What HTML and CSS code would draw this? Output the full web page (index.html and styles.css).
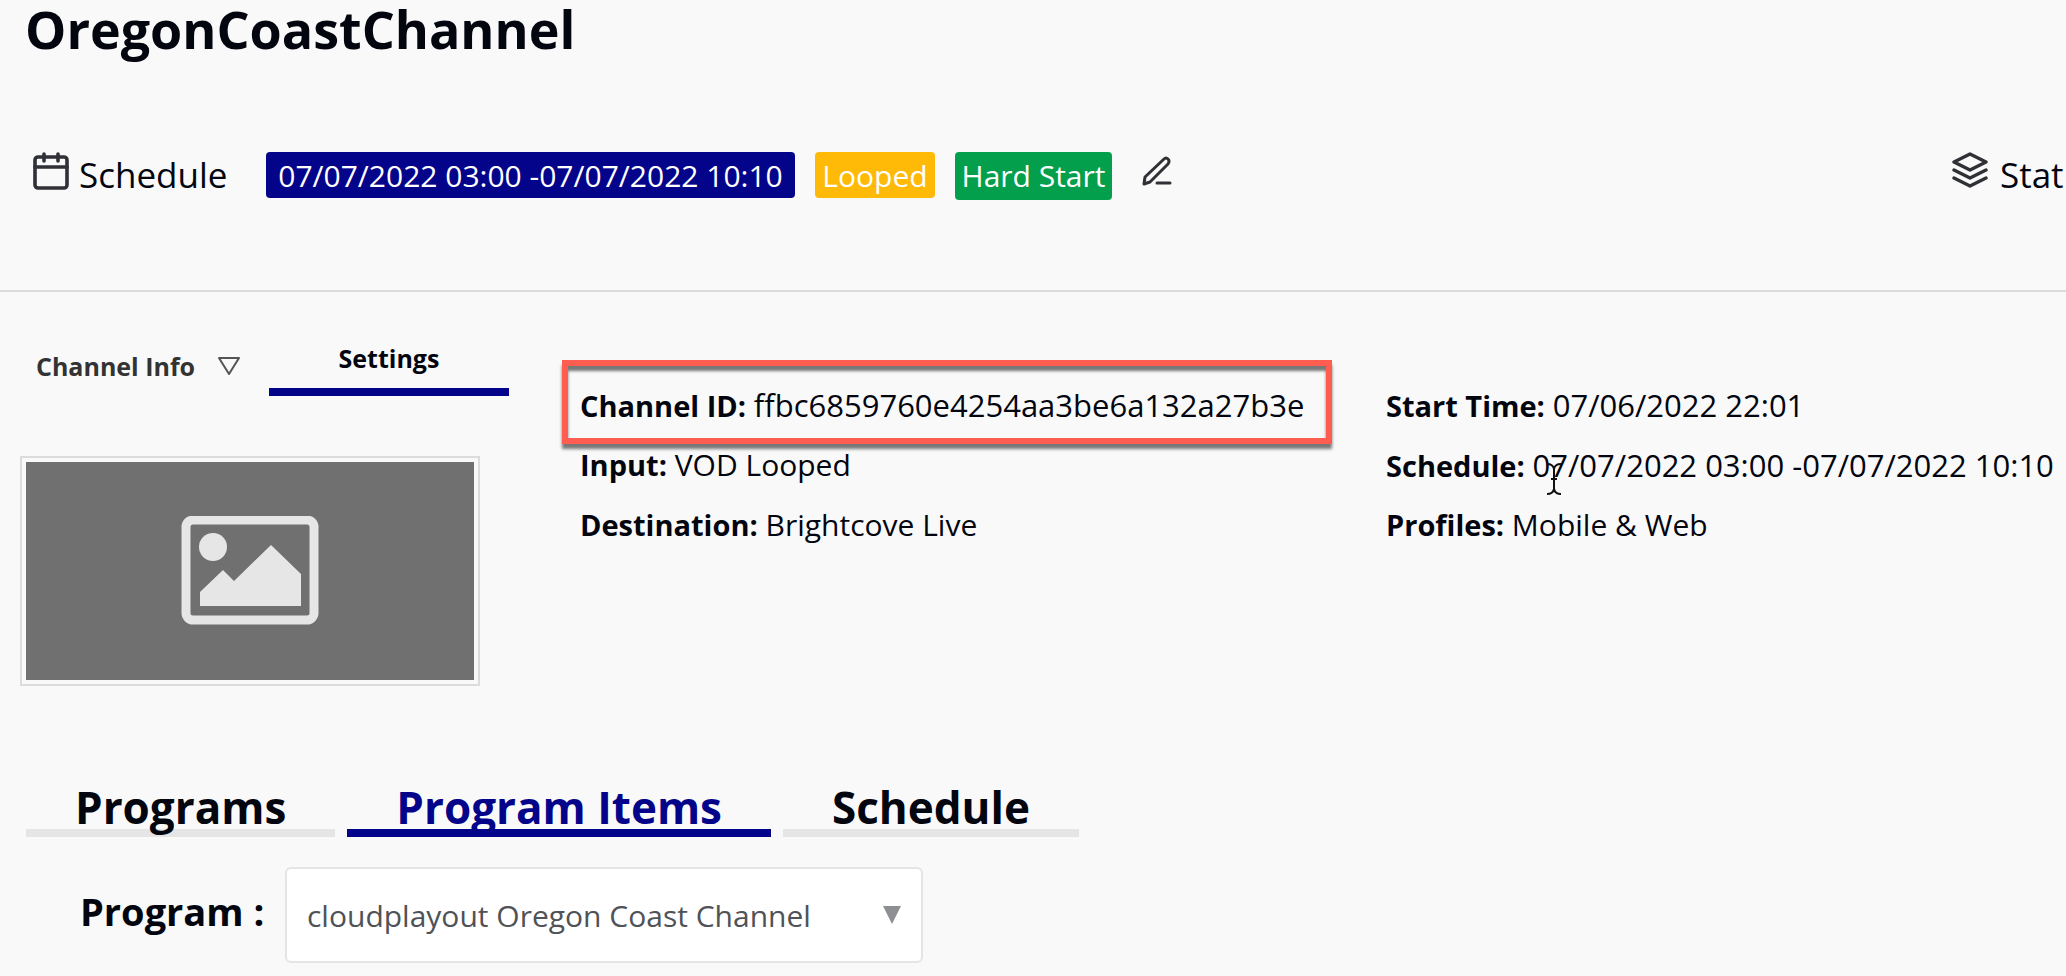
FILE: index.html
```html
<!DOCTYPE html>
<html lang="en">
<head>
    <meta charset="utf-8">
    <title>OregonCoastChannel</title>
    <link rel="stylesheet" href="styles.css">
</head>
<body>
    <header class="channel-header">
        <h1>OregonCoastChannel</h1>
        <div class="toolbar">
            <div class="schedule">
                <svg class="calendar-icon" viewBox="0 0 36 38" fill="none" stroke="#303136" stroke-width="3.6" stroke-linecap="round" stroke-linejoin="round">
                    <rect x="2" y="5" width="32" height="31" rx="3"/>
                    <path d="M2 15h32M11 2v7M25 2v7"/>
                </svg>
                <span class="label">Schedule</span>
            </div>
            <span class="badge badge-date">07/07/2022 03:00 -07/07/2022 10:10</span>
            <span class="badge badge-looped">Looped</span>
            <span class="badge badge-start">Hard Start</span>
            <button class="edit" aria-label="Edit schedule">
                <svg viewBox="0 0 30 30" fill="none" stroke="#303136" stroke-width="3" stroke-linecap="round" stroke-linejoin="round">
                    <path d="M2 28l1-7L22 3q2-2 4 0t0 5L8 26zM15 27h13"/>
                </svg>
            </button>
            <div class="status">
                <svg viewBox="0 0 36 36" fill="none" stroke="#303136" stroke-width="3.4" stroke-linecap="round" stroke-linejoin="round">
                    <path d="M18 2l16 8-16 8-16-8zM2 18l16 8 16-8M2 26l16 8 16-8"/>
                </svg>
                <span class="label">Stat</span>
            </div>
        </div>
    </header>

    <main>
        <section class="info">
            <div class="side">
                <div class="info-tabs">
                    <button class="info-toggle">Channel Info
                        <svg viewBox="0 0 24 20" fill="none" stroke="#555" stroke-width="2" stroke-linejoin="round"><path d="M2 2h20l-10 16z"/></svg>
                    </button>
                    <button class="info-tab">Settings</button>
                </div>
                <div class="thumb">
                    <svg viewBox="0 0 138 110" fill="#e6e6e6">
                        <rect x="5" y="4" width="128" height="100" rx="7" fill="none" stroke="#e6e6e6" stroke-width="9"/>
                        <circle cx="32" cy="31" r="14"/>
                        <path d="M19 76l23-22 11 11 37-36 30 29v32H19z"/>
                    </svg>
                </div>
            </div>
            <div class="details">
                <p class="highlight"><b>Channel ID:</b> <span class="code">ffbc6859760e4254aa3be6a132a27b3e</span></p>
                <p><b>Input:</b> VOD Looped</p>
                <p><b>Destination:</b> Brightcove Live</p>
            </div>
            <div class="details times">
                <p><b>Start Time:</b> <span class="code">07/06/2022 22:01</span></p>
                <p class="hovered"><b>Schedule:</b> <span class="code">07/07/2022 03:00 -07/07/2022 10:10</span>
                    <svg class="cursor" viewBox="0 0 16 34" fill="none" stroke="#111" stroke-width="2"><path d="M1 2q6 0 7 5 1-5 7-5M8 7v20M5 17h6M1 32q6 0 7-5 1 5 7 5"/></svg>
                </p>
                <p><b>Profiles:</b> Mobile &amp; Web</p>
            </div>
        </section>

        <nav class="tabs">
            <button>Programs</button>
            <button class="active">Program Items</button>
            <button>Schedule</button>
        </nav>

        <div class="program">
            <label for="program">Program :</label>
            <div class="select">
                <select id="program">
                    <option>cloudplayout Oregon Coast Channel</option>
                </select>
                <svg viewBox="0 0 18 18" fill="#8e8f93"><path d="M0 0h18L9 18z"/></svg>
            </div>
        </div>
    </main>
</body>
</html>
```

FILE: styles.css
```css
* { box-sizing: border-box; }
body { margin: 0; background: #f9f9f9; color: #03050f; font-family: "Open Sans", Arial, sans-serif; font-size: 30px; overflow-x: hidden; }
h1, p { margin: 0; }
svg { display: block; flex: none; }
button { font-family: inherit; color: inherit; background: none; border: none; padding: 0; cursor: pointer; }

.channel-header { height: 292px; border-bottom: 2px solid #dcdcdc; }
h1 { font-size: 52px; line-height: 58px; padding-left: 25px; font-weight: 700; }

.toolbar { display: flex; align-items: flex-start; padding: 94px 0 0 33px; white-space: nowrap; }
.label { font-size: 35px; line-height: 46px; }
.schedule { display: flex; gap: 10px; width: 233px; }
.calendar-icon { width: 36px; height: 38px; }
.badge { height: 46px; font-size: 30px; line-height: 48px; margin-right: 20px; border-radius: 4px; color: #fff; text-align: center; }
.badge-date { background: #04048a; width: 529px; }
.badge-looped { background: #ffb907; width: 120px; }
.badge-start { background: #049f4c; width: 157px; height: 48px; }
.edit { margin: 4px 0 0 10px; }
.edit svg { width: 30px; height: 30px; }
.status { display: flex; gap: 12px; margin-left: auto; width: 114px; }
.status svg { width: 36px; height: 36px; }

.info { display: flex; height: 486px; }
.side { width: 562px; padding-top: 48px; flex: none; }
.info-tabs { display: flex; height: 56px; padding-left: 36px; }
.info-toggle { display: flex; align-items: center; justify-content: space-between; width: 205px; margin-right: 28px; padding-bottom: 4px; font-size: 25px; font-weight: 700; color: #333; }
.info-toggle svg { width: 24px; height: 20px; }
.info-tab { width: 240px; border-bottom: 8px solid #04048a; padding-bottom: 12px; font-size: 25px; font-weight: 700; }
.thumb { width: 460px; height: 230px; margin: 60px 0 0 20px; border: 2px solid #dcdcdc; padding: 4px; background: #707070 content-box; display: flex; align-items: center; justify-content: center; }
.thumb svg { width: 138px; height: 110px; }

.details { padding-top: 83px; line-height: 60px; white-space: nowrap; width: 824px; flex: none; }
.details p { height: 60px; padding-left: 18px; }
.details b { font-size: 29px; }
.details .code { font-size: 31px; }
.details .highlight { width: 770px; height: 84px; margin: -15px 0 -9px; padding: 9px 12px 0; border: 6px solid #ff5d50; box-shadow: 0 5px 3px #777, inset 0 5px 3px #777; }
.details.times { width: auto; }
.details.times p { padding-left: 0; }
.hovered { position: relative; }
.cursor { position: absolute; left: 160px; top: 27px; width: 16px; height: 34px; }

.tabs { display: flex; gap: 12px; padding-left: 26px; }
.tabs button { height: 59px; padding: 7px 49px 0; border-bottom: 8px solid #e5e5e5; font-size: 44px; line-height: 44px; font-weight: 700; }
.tabs .active { color: #04048a; border-color: #04048a; }

.program { display: flex; align-items: center; padding: 30px 0 12px 80px; }
.program label { width: 205px; font-size: 38px; font-weight: 700; line-height: 54px; padding-bottom: 8px; white-space: nowrap; }
.select { position: relative; width: 638px; }
.select select { appearance: none; width: 100%; height: 96px; padding: 0 60px 0 20px; border: 2px solid #e5e5e5; border-radius: 6px; background: #fff; color: #4f5256; font-family: inherit; font-size: 30px; }
.select svg { position: absolute; right: 22px; top: 39px; width: 18px; height: 18px; pointer-events: none; }
```
